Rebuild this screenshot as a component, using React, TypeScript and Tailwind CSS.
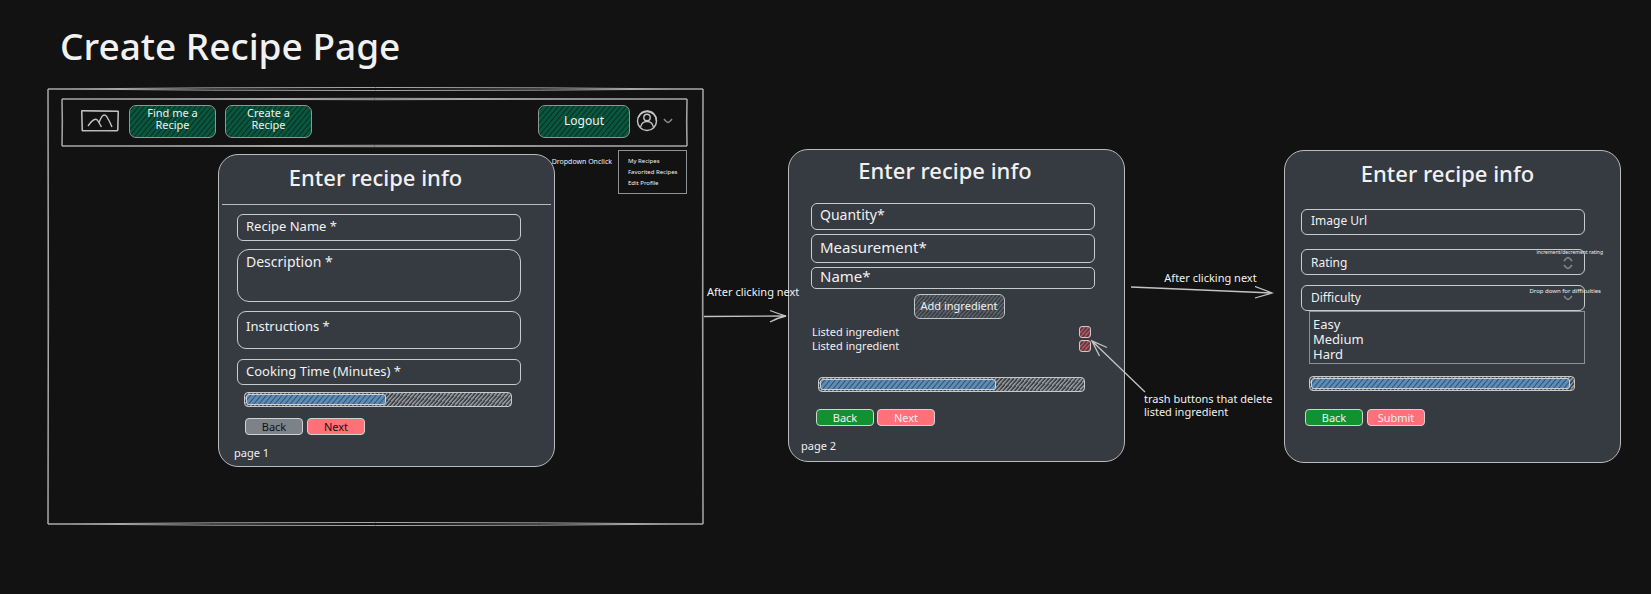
import { CSSProperties, ReactNode } from "react";

const HATCH: Record<string, string> = {
  green: "bg-[repeating-linear-gradient(130deg,#06583f_0px,#06583f_2px,#102a21_3px,#06583f_4px)]",
  blue: "bg-[repeating-linear-gradient(130deg,#5b8dbb_0px,#5b8dbb_2px,#3c4f62_3px,#5b8dbb_4px)]",
  gray: "bg-[repeating-linear-gradient(130deg,#8f9295_0px,#8f9295_1px,#40444a_2px,#40444a_3px)]",
  slate: "bg-[repeating-linear-gradient(130deg,#5a6068_0px,#5a6068_1px,#3a3f46_2px,#3a3f46_3px)]",
  red: "bg-[repeating-linear-gradient(130deg,#b4525a_0px,#b4525a_1px,#5a3c44_2px,#5a3c44_3px)]",
};

function RoughOutline({ bow }: { bow: number }) {
  return (
    <svg
      className="pointer-events-none absolute inset-0 h-full w-full overflow-visible"
      viewBox="0 0 100 100"
      preserveAspectRatio="none"
      fill="none"
      stroke="#a9a9a9"
      aria-hidden="true"
    >
      <path vectorEffect="non-scaling-stroke" d={`M0 0Q50 ${-bow} 100 0L99.900 50L100 100Q50 ${100 + bow} 0 100Z`} />
      <path vectorEffect="non-scaling-stroke" d={`M0 0Q50 ${bow} 100 0L100 100Q50 ${100 - bow} 0 100L0.100 50Z`} />
    </svg>
  );
}

function Card({ className, children }: { className: string; children: ReactNode }) {
  return (
    <section className={`relative flex h-[313px] flex-col rounded-[20px] border border-[#b9babb] bg-[#363a41] ${className}`}>
      {children}
    </section>
  );
}

const FIELD =
  "block w-full border border-[#c9cacb] bg-transparent px-2 text-[#f1f1f1] outline-none placeholder:text-[#f1f1f1] placeholder:opacity-100";

function Progress({ value }: { value: number }) {
  const style: CSSProperties = { width: `${value}%` };
  return (
    <div
      role="progressbar"
      aria-label="Form progress"
      aria-valuenow={value}
      className={`h-[15px] rounded-[4px] border border-[#c9c9c9] p-px ${HATCH.gray}`}
    >
      <div style={style} className={`h-full rounded-[3px] border border-[#c9d2da] ${HATCH.blue}`} />
    </div>
  );
}

function Action({ className, children }: { className: string; children: ReactNode }) {
  return (
    <button type="button" className={`flex h-[17px] w-[58px] items-center justify-center rounded-[4px] border border-[#d2d2d2] text-[11px] leading-none ${className}`}>
      {children}
    </button>
  );
}

function NavButton({ className, children }: { className: string; children: ReactNode }) {
  return (
    <button type="button" className={`rounded-[7px] border border-[#8d9693] text-[#f1f1f1] ${HATCH.green} ${className}`}>
      {children}
    </button>
  );
}

function Chevron({ up }: { up?: boolean }) {
  return (
    <svg width="10" height="6" viewBox="0 0 10 6" fill="none" stroke="#86898d" strokeWidth="1.500" aria-hidden="true">
      <path d={up ? "M1 5Q4 1.500 5 1.500Q6 1.500 9 5" : "M1 1Q4 4.500 5 4.500Q6 4.500 9 1"} />
    </svg>
  );
}

function DeleteButton() {
  return (
    <button type="button" aria-label="Delete ingredient" className={`h-3 w-3 rounded-[3px] border border-[#d2c6c8] ${HATCH.red}`} />
  );
}

export default function App() {
  return (
    <main className="min-h-screen bg-[#121212] pr-[30px] pl-12 font-['Noto_Sans',sans-serif] text-[#f1f1f1]">
      <h1 className="h-[89px] pt-[22px] pl-3 text-[37px] leading-[48px] font-medium whitespace-nowrap">Create Recipe Page</h1>

      <div className="grid grid-cols-[655fr_85fr_337fr_159fr_337fr] items-start">
        <div className="relative h-[435px] pt-[10px] pr-4 pl-[14px]">
          <RoughOutline bow={0.7} />
          <header className="relative flex h-[47px] items-center pr-[14px] pb-[3px] pl-[19px]">
            <RoughOutline bow={3} />
            <a href="#home" aria-label="Home" className="mr-[10px]">
              <svg width="38" height="22" viewBox="0 0 38 22" fill="none" stroke="#c4c4c4" aria-hidden="true">
                <path d="M1 1L37 1.500L37 20.500L1 21Z M0.500 0.500L37.500 1L36.500 21L1.500 20.500Z" />
                <path strokeWidth="1.400" d="M7 16Q14 6 17 11L20.500 17M18 13Q22 1 26 7Q29 12 31 17" />
              </svg>
            </a>
            <NavButton className="mr-[9px] h-[33px] w-[87px] pb-1 text-[11px] leading-3">Find me a<br />Recipe</NavButton>
            <NavButton className="h-[33px] w-[87px] pb-1 text-[11px] leading-3">Create a<br />Recipe</NavButton>
            <NavButton className="ml-auto h-[33px] w-[92px] text-[12px] leading-4">Logout</NavButton>
            <button type="button" aria-label="Account" className="ml-[6px] flex items-center gap-[5px]">
              <svg width="22" height="22" viewBox="0 0 22 22" fill="none" stroke="#c4c4c4" strokeWidth="1.400" aria-hidden="true">
                <circle cx="11" cy="11" r="9.500" />
                <path d="M2 8Q5 0.500 12 1Q20 2 20.500 11" />
                <circle cx="11" cy="7.500" r="3.200" />
                <path d="M4.500 17.500Q5.500 11.500 11 11.500Q16.500 11.500 17.500 17.500" />
              </svg>
              <Chevron />
            </button>
          </header>

          <div className="absolute top-[61px] right-4 z-10 flex items-start gap-[6px]">
            <p className="pt-[7px] text-[7px] leading-[10px] whitespace-nowrap">Dropdown Onclick</p>
            <ul className="flex h-[44px] w-[69px] flex-col justify-between border border-[#8d9297] py-[6px] pl-[9px] text-[6px] leading-[8px] whitespace-nowrap">
              <li>My Recipes</li>
              <li>Favorited Recipes</li>
              <li>Edit Profile</li>
            </ul>
          </div>

          <div className="mt-2 pr-[132px] pl-[156px]">
            <Card className="px-[3px]">
              <h2 className="h-[50px] border-b border-[#b9babb] pt-2 pr-[22px] text-center text-[22px] leading-7 font-medium">Enter recipe info</h2>
              <div className="flex flex-col pt-[9px] pr-[30px] pl-[15px]">
                <input aria-label="Recipe Name" placeholder="Recipe Name *" className={`${FIELD} mb-2 h-[27px] rounded-[6px] pb-[3px] text-[13px]`} />
                <textarea aria-label="Description" placeholder="Description *" className={`${FIELD} mb-[9px] h-[53px] resize-none rounded-[12px] pt-px text-[14px]`} />
                <textarea aria-label="Instructions" placeholder="Instructions *" className={`${FIELD} mb-[10px] h-[38px] resize-none rounded-[9px] pt-[5px] text-[13px]`} />
                <input aria-label="Cooking Time in minutes" placeholder="Cooking Time (Minutes) *" className={`${FIELD} mb-[7px] h-[26px] rounded-[6px] pb-[3px] text-[13px]`} />
                <div className="pr-[9px] pl-[7px]"><Progress value={53} /></div>
                <div className="flex gap-1 pt-[11px] pl-2">
                  <Action className="bg-[#7b828a] text-[#121212]">Back</Action>
                  <Action className="bg-[#ff7078] text-[#121212]">Next</Action>
                </div>
              </div>
              <p className="pt-[10px] pl-3 text-[11px] leading-4">page 1</p>
            </Card>
          </div>
        </div>

        <div className="relative h-[435px]">
          <p className="absolute top-[195px] left-1 z-10 text-[11px] leading-4 whitespace-nowrap">After clicking next</p>
          <svg className="mt-[220px] block w-full" height="14" viewBox="0 0 85 14" preserveAspectRatio="none" fill="none" stroke="#c4c4c4" aria-hidden="true">
            <path strokeWidth="1.300" d="M1 7.500L83 7M67 1.500Q76 5 83 7Q74 9 67 13" />
          </svg>
        </div>

        <Card className="mt-[60px] pr-[29px] pl-[22px]">
          <h2 className="h-[53px] pt-[6px] pr-4 text-center text-[22px] leading-7 font-medium">Enter recipe info</h2>
          <input aria-label="Quantity" placeholder="Quantity*" className={`${FIELD} mb-1 h-[27px] shrink-0 rounded-[6px] pb-1 text-[14px]`} />
          <input aria-label="Measurement" placeholder="Measurement*" className={`${FIELD} mb-1 h-[29px] shrink-0 rounded-[6px] pb-1 text-[15px]`} />
          <input aria-label="Ingredient name" placeholder="Name*" className={`${FIELD} mb-[5px] h-[22px] shrink-0 rounded-[5px] pb-[3px] text-[15px]`} />
          <button type="button" className={`ml-[12px] h-[25px] w-[91px] shrink-0 self-center rounded-[6px] border border-[#c4c5c6] text-[11px] ${HATCH.slate}`}>Add ingredient</button>
          <ul className="pt-[7px] pr-1 pl-px text-[11px] leading-[12px]">
            <li className="flex h-[14px] items-start justify-between">Listed ingredient<DeleteButton /></li>
            <li className="flex h-[14px] items-start justify-between">Listed ingredient<DeleteButton /></li>
          </ul>
          <div className="pt-[23px] pr-[10px] pl-[7px]"><Progress value={67} /></div>
          <div className="flex gap-[3px] pt-[17px] pl-[5px]">
            <Action className="bg-[#129130]">Back</Action>
            <Action className="bg-[#ff7078]">Next</Action>
          </div>
          <p className="-ml-[10px] pt-3 text-[11px] leading-4">page 2</p>
        </Card>

        <div className="relative h-[435px]">
          <p className="pt-[181px] text-center text-[11px] leading-4">
            <span className="pl-3 whitespace-nowrap">After clicking next</span>
          </p>
          <svg className="block w-full" height="14" viewBox="0 0 159 14" preserveAspectRatio="none" fill="none" stroke="#c4c4c4" aria-hidden="true">
            <path strokeWidth="1.300" d="M6 1L147 7M130 0.500L147 7L130 12" />
          </svg>
          <svg className="absolute top-[250px] -left-[34px]" width="56" height="56" viewBox="0 0 56 56" fill="none" stroke="#c4c4c4" strokeWidth="1.300" aria-hidden="true">
            <path d="M54 53L1 2M16 8.500L1 2L8.500 17" />
          </svg>
          <p className="pt-[92px] pl-[19px] text-[11px] leading-[13px] whitespace-nowrap">trash buttons that delete<br />listed ingredient</p>
        </div>

        <Card className="mt-[61px] pr-[35px] pl-[16px]">
          <h2 className="h-[58px] pt-2 text-[22px] leading-7 font-medium">
            <span className="block pl-[9px] text-center">Enter recipe info</span>
          </h2>
          <input aria-label="Image Url" placeholder="Image Url" className={`${FIELD} mb-[14px] h-[26px] shrink-0 rounded-[6px] pb-[3px] pl-[9px] text-[12px]`} />
          <div className="relative mb-[10px]">
            <input aria-label="Rating" placeholder="Rating" className={`${FIELD} h-[26px] rounded-[6px] pl-[9px] text-[12px]`} />
            <p className="absolute top-0 -right-[18px] text-[5px] leading-[7px] whitespace-nowrap">increment/decrement rating</p>
            <span className="absolute top-[7px] right-3 flex flex-col gap-[2px]"><Chevron up /><Chevron /></span>
          </div>
          <div className="relative">
            <select aria-label="Difficulty" className={`${FIELD} h-[26px] appearance-none rounded-[6px] pl-[9px] text-[12px]`}>
              <option>Difficulty</option>
            </select>
            <p className="absolute top-[3px] -right-[16px] text-[6px] leading-[7px] whitespace-nowrap">Drop down for difficulties</p>
            <span className="absolute top-[10px] right-3 flex"><Chevron /></span>
          </div>
          <ul className="ml-2 h-[53px] border border-[#8d9093] pt-[5px] pl-[3px] text-[13px] leading-[15px]">
            <li>Easy</li>
            <li>Medium</li>
            <li>Hard</li>
          </ul>
          <div className="pt-[12px] pr-[10px] pl-[8px]"><Progress value={99} /></div>
          <div className="flex gap-1 pt-[18px] pl-1">
            <Action className="bg-[#129130]">Back</Action>
            <Action className="bg-[#ff7078]">Submit</Action>
          </div>
        </Card>
      </div>
    </main>
  );
}
